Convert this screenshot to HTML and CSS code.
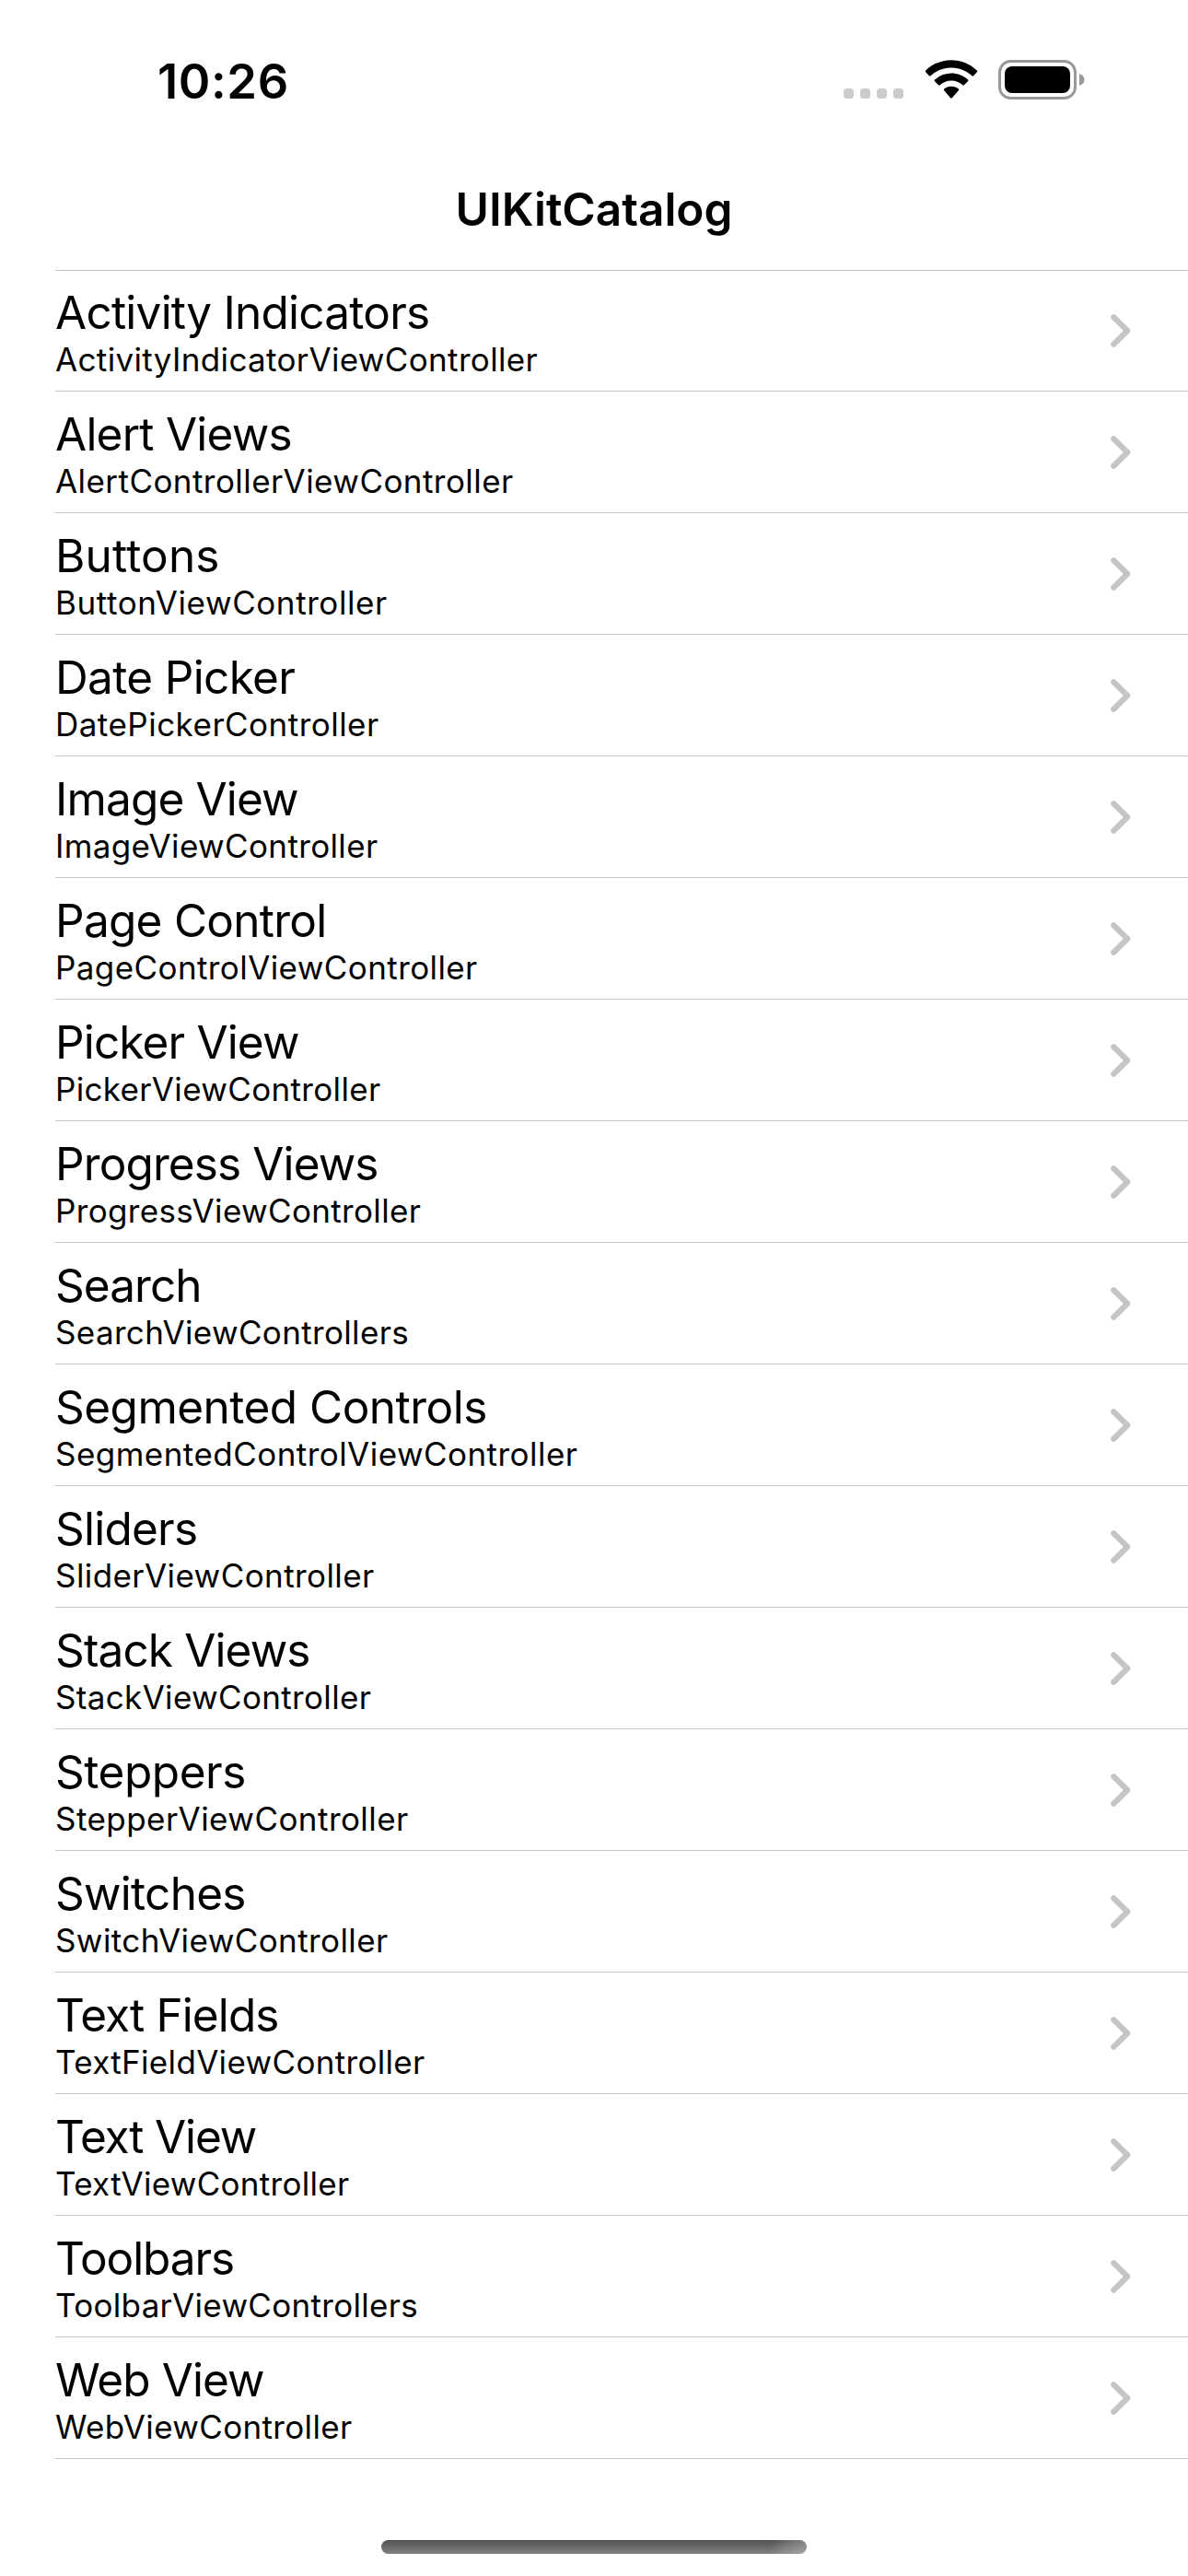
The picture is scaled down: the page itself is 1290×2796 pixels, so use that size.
FILE: index.html
```html
<!DOCTYPE html>
<html lang="en">
<head>
<meta charset="utf-8">
<title>UIKitCatalog</title>
<link rel="stylesheet" href="styles.css">
</head>
<body>
<div class="screen">
  <header class="status">
    <div class="time">10:26</div>
    <div class="indicators">
      <div class="signal"><i></i><i></i><i></i><i></i></div>
      <svg class="wifi" width="58" height="43" viewBox="0 0 58 43">
        <path d="M1.200 13.200a1.200 1.200 0 0 1 0-1.700C16.800-3.600 41.200-3.600 56.800 11.500a1.200 1.200 0 0 1 0 1.700l-3.700 4a1.200 1.200 0 0 1-1.700 0C39 5.600 19 5.600 6.600 17.200a1.200 1.200 0 0 1-1.700 0z"/>
        <path d="M11 23.200a1.200 1.200 0 0 1 0-1.700C21 12.300 37 12.300 47 21.500a1.200 1.200 0 0 1 0 1.700l-4 4a1.200 1.200 0 0 1-1.700 0C34.400 20.900 23.600 20.900 16.700 27.200a1.200 1.200 0 0 1-1.700 0z"/>
        <path d="M21.200 33.300a1.200 1.200 0 0 1 0-1.700C25.500 27.900 32.500 27.900 36.800 31.600a1.200 1.200 0 0 1 0 1.700l-7 7.900a1.200 1.200 0 0 1-1.700 0z"/>
      </svg>
      <svg class="battery" width="94" height="43" viewBox="0 0 94 43">
        <rect x="1.500" y="1.500" width="82" height="40" rx="12" fill="none" stroke="#999" stroke-width="3"/>
        <rect x="7" y="7" width="71" height="29" rx="8"/>
        <path d="M88 15q5.500 2.200 5.500 6.500T88 28z" fill="#999"/>
      </svg>
    </div>
  </header>
  <h1 class="title">UIKitCatalog</h1>
  <ul class="list"></ul>
  <div class="home"></div>
</div>
<script src="catalog.js"></script>
</body>
</html>
```
FILE: catalog.js
```js
// name, detail, and the tracking of each in pixels
const rows = [
  ["Activity Indicators", "ActivityIndicatorViewController", -0.76, 0.35],
  ["Alert Views", "AlertControllerViewController", -0.77, 0.44],
  ["Buttons", "ButtonViewController", 0.17, 0.59],
  ["Date Picker", "DatePickerController", -0.65, 0.48],
  ["Image View", "ImageViewController", -0.85, 0.36],
  ["Page Control", "PageControlViewController", -0.73, 0.41],
  ["Picker View", "PickerViewController", -0.85, 0.34],
  ["Progress Views", "ProgressViewController", -0.89, 0.35],
  ["Search", "SearchViewControllers", -0.94, 0.35],
  ["Segmented Controls", "SegmentedControlViewController", -0.52, 0.46],
  ["Sliders", "SliderViewController", -0.76, 0.42],
  ["Stack Views", "StackViewController", -0.87, 0.34],
  ["Steppers", "StepperViewController", -0.45, 0.45],
  ["Switches", "SwitchViewController", -0.72, 0.41],
  ["Text Fields", "TextFieldViewController", -0.9, 0.33],
  ["Text View", "TextViewController", -1.17, 0.29],
  ["Toolbars", "ToolbarViewControllers", -1.09, 0.31],
  ["Web View", "WebViewController", -0.92, 0.35]
];
document.querySelector(".list").innerHTML = rows.map(([name, detail, nameTracking, detailTracking]) => `
  <li class="row">
    <div class="labels">
      <div class="name" style="letter-spacing:${nameTracking}px">${name}</div>
      <div class="detail" style="letter-spacing:${detailTracking}px">${detail}</div>
    </div>
    <svg class="chevron" width="22" height="36" viewBox="0 0 22 36"><path d="M3.300 3.300 18.200 18 3.300 32.700"/></svg>
  </li>`).join("");
```
FILE: styles.css
```css
* { box-sizing: border-box; }
body { margin: 0; background: #fff; }
.screen {
  display: flex;
  flex-direction: column;
  width: 1290px;
  height: 2796px;
  overflow: hidden;
  background: #fff;
  color: #000;
  font-family: Inter, "Liberation Sans", sans-serif;
}
.status {
  display: flex;
  justify-content: space-between;
  height: 177px;
  padding: 56px 112px 0 171px;
}
.time {
  font-size: 52.5px;
  line-height: 64px;
  font-weight: 600;
  letter-spacing: 0.6px;
}
.indicators { display: flex; height: 43px; margin-top: 9px; }
.signal { display: flex; align-items: flex-end; gap: 7px; margin-right: 23px; padding-bottom: 1px; }
.signal i { width: 11px; height: 11px; border-radius: 3.5px; background: #cbcbcb; }
.wifi { margin-right: 22px; }
.title {
  height: 116px;
  margin: 0;
  padding-top: 20px;
  text-align: center;
  font-size: 49.5px;
  line-height: 60px;
  font-weight: 600;
}
.list {
  margin: 0 0 0 60px;
  padding: 0;
  list-style: none;
  border-top: 1px solid #c6c6c8;
}
.row {
  display: flex;
  justify-content: space-between;
  align-items: flex-start;
  height: 132px;
  padding-right: 62px;
  border-bottom: 1px solid #c6c6c8;
}
.row:first-child { margin-top: -1px; }
.labels { padding-top: 16px; }
.name { font-size: 49.5px; line-height: 60px; }
.detail { font-size: 35px; line-height: 42px; }
.chevron {
  margin-top: 48px;
  fill: none;
  stroke: #c5c5c7;
  stroke-width: 6.2;
  stroke-linecap: round;
  stroke-linejoin: round;
}
.home {
  width: 462px;
  height: 15px;
  margin: 88px auto 0;
  border-radius: 7.5px;
  background:
    linear-gradient(100deg, transparent 91%, rgba(255, 255, 255, 0.3) 100%),
    linear-gradient(#505050, #828282);
}
```
